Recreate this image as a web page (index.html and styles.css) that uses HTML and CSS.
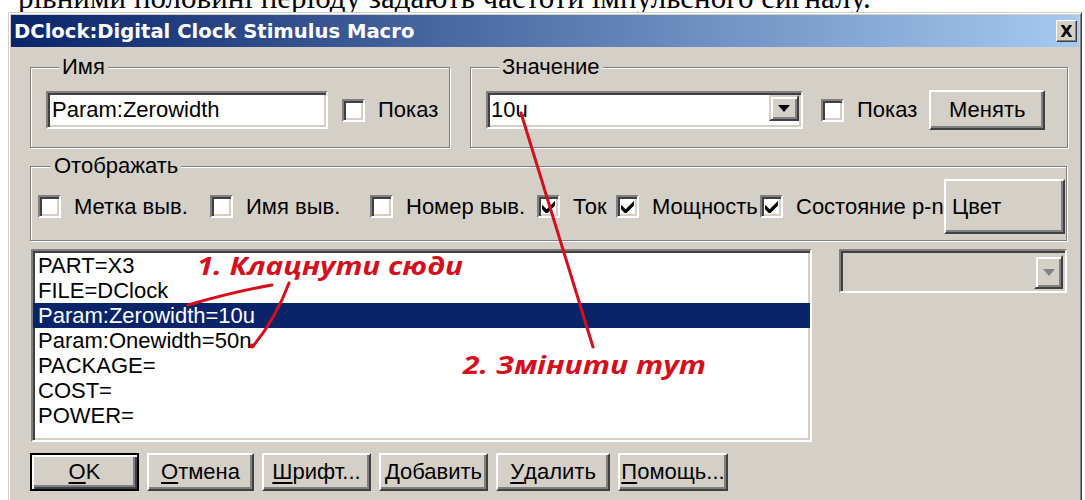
FILE: index.html
```html
<!DOCTYPE html>
<html lang="uk">
<head>
<meta charset="utf-8">
<title>DClock:Digital Clock Stimulus Macro</title>
<link rel="stylesheet" href="styles.css">
</head>
<body>
  <div class="doc-line"><p>рівними половині періоду задають частоти імпульсного сигналу.</p></div>

  <div class="window">
    <div class="titlebar">
      <span class="title">DClock:Digital Clock Stimulus Macro</span>
      <span class="close">X</span>
    </div>

    <div class="client">
      <div class="top-row">
        <fieldset class="group group-name">
          <legend>Имя</legend>
          <div class="edit name-edit">Param:Zerowidth</div>
          <label class="check"><span class="box"></span><span>Показ</span></label>
        </fieldset>

        <fieldset class="group group-value">
          <legend>Значение</legend>
          <div class="combo value-combo">
            <span class="combo-text">10u</span>
            <span class="drop"><svg viewBox="0 0 7 4"><polygon points="0,0 7,0 3.5,4"/></svg></span>
          </div>
          <label class="check"><span class="box"></span><span>Показ</span></label>
          <span class="btn change-btn">Менять</span>
        </fieldset>
      </div>

      <fieldset class="group group-show">
        <legend>Отображать</legend>
        <label class="check"><span class="box"></span><span>Метка выв.</span></label>
        <label class="check"><span class="box"></span><span>Имя выв.</span></label>
        <label class="check"><span class="box"></span><span>Номер выв.</span></label>
        <label class="check"><span class="box"><svg class="tick" viewBox="0 0 7 7"><polygon points="0,2.5 2.5,5 7,0.5 7,3 2.5,7.5 0,5"/></svg></span><span>Ток</span></label>
        <label class="check"><span class="box"><svg class="tick" viewBox="0 0 7 7"><polygon points="0,2.5 2.5,5 7,0.5 7,3 2.5,7.5 0,5"/></svg></span><span>Мощность</span></label>
        <label class="check"><span class="box"><svg class="tick" viewBox="0 0 7 7"><polygon points="0,2.5 2.5,5 7,0.5 7,3 2.5,7.5 0,5"/></svg></span><span>Состояние p-n</span></label>
        <span class="btn color-btn">Цвет</span>
      </fieldset>

      <div class="mid-row">
        <ul class="listbox">
          <li>PART=X3</li>
          <li>FILE=DClock</li>
          <li class="selected">Param:Zerowidth=10u</li>
          <li>Param:Onewidth=50n</li>
          <li>PACKAGE=</li>
          <li>COST=</li>
          <li>POWER=</li>
        </ul>
        <div class="combo combo-disabled">
          <span class="combo-text"></span>
          <span class="drop"><svg viewBox="0 0 7 4"><polygon points="0,0 7,0 3.5,4"/></svg></span>
        </div>
      </div>

      <div class="btn-row">
        <span class="btn btn-default"><u>O</u>K</span>
        <span class="btn"><u>О</u>тмена</span>
        <span class="btn"><u>Ш</u>рифт...</span>
        <span class="btn"><u>Д</u>обавить</span>
        <span class="btn"><u>У</u>далить</span>
        <span class="btn"><u>П</u>омощь...</span>
      </div>
    </div>
  </div>

  <!-- hand-drawn callouts on top of the dialog -->
  <svg class="callouts" viewBox="0 0 1085 500" width="1085" height="500">
    <g class="strokes">
      <path d="M272 285 Q232 292 188 305"/>
      <path d="M289 283 Q276 318 254 345"/>
      <path d="M521 113 Q556 228 593 347"/>
    </g>
    <circle class="dot" cx="252" cy="346" r="2.5"/>
    <text class="note" x="197" y="275" textLength="266" lengthAdjust="spacingAndGlyphs">1. Клацнути сюди</text>
    <text class="note" x="463" y="374" textLength="243" lengthAdjust="spacingAndGlyphs">2. Змінити тут</text>
  </svg>
</body>
</html>
```

FILE: styles.css
```css
body {
  margin: 0;
  width: 1085px;
  height: 500px;
  overflow: hidden;
  position: relative;
  background: #fff;
  font-family: "Liberation Sans", Arial, sans-serif;
  font-size: 22px;
  color: #000;
}

/* line of the surrounding document, cut off by the top edge */
.doc-line {
  height: 12px;
  overflow: hidden;
}
.doc-line p {
  margin: -18px 0 0 18px;
  font: 31px/32px "Liberation Serif", "Times New Roman", serif;
  white-space: nowrap;
}

/* classic window frame */
.window {
  margin-left: 8px;
  width: 1074px;
  height: 494px;
  box-sizing: border-box;
  padding: 2px;
  background: #d4d0c8;
  border: 1px solid;
  border-color: #d4d0c8 #404040 #404040 #d4d0c8;
  box-shadow: inset 1px 1px #fff, inset -1px -1px #808080;
}

.titlebar {
  height: 32px;
  display: flex;
  align-items: center;
  justify-content: space-between;
  padding: 0 2px 0 3px;
  background: linear-gradient(to right, #0a246a, #a6caf0);
}
.title {
  color: #fff;
  font: bold 19.6px "DejaVu Sans", Verdana, sans-serif;
  white-space: nowrap;
}
.close {
  width: 21px;
  height: 22px;
  box-sizing: border-box;
  display: flex;
  align-items: center;
  justify-content: center;
  background: #d4d0c8;
  border: 1px solid;
  border-color: #fff #404040 #404040 #fff;
  box-shadow: inset -1px -1px #808080;
  font: bold 16px "DejaVu Sans", sans-serif;
}

.client {
  padding: 9px 11px 0 19px;
}

/* etched group boxes */
.group {
  margin: 0;
  min-width: 0;
  box-sizing: border-box;
  border: 1px solid #808080;
  box-shadow: inset 1px 1px #fff, 1px 1px #fff;
  display: flex;
  align-items: center;
}
.group legend {
  margin-left: 13px;
  padding: 0 3px;
  line-height: 22px;
  background: #d4d0c8;
  white-space: nowrap;
}

.top-row {
  display: flex;
  gap: 20px;
}
.group-name {
  width: 420px;
  padding: 12px 8px 17px 15px;
}
.group-value {
  width: 598px;
  padding: 12px 8px 17px 15px;
}

/* sunken fields */
.edit,
.combo,
.box,
.listbox {
  box-sizing: border-box;
  border: 2px solid;
  border-color: #808080 #fff #fff #808080;
  box-shadow: inset 2px 2px #404040, inset -2px -2px #d4d0c8;
  background: #fff;
}

.edit {
  height: 38px;
  display: flex;
  align-items: center;
  padding: 0 4px;
  white-space: nowrap;
}
.name-edit {
  width: 282px;
}

.combo {
  height: 38px;
  display: flex;
  align-items: flex-start;
  padding: 2px;
}
.combo-text {
  flex: 1;
  align-self: center;
  padding-left: 1px;
}
.value-combo {
  width: 317px;
}
.drop {
  width: 30px;
  height: 26px;
  box-sizing: border-box;
  display: flex;
  align-items: center;
  justify-content: center;
  background: #d4d0c8;
  border: 2px solid;
  border-color: #d4d0c8 #404040 #404040 #d4d0c8;
  box-shadow: inset 2px 2px #fff, inset -2px -2px #808080;
}
.drop svg {
  width: 12px;
  height: 7px;
  fill: #000;
}

.check {
  display: flex;
  align-items: center;
  gap: 13px;
  white-space: nowrap;
}
.box {
  width: 23px;
  height: 23px;
  flex: none;
  display: flex;
  align-items: center;
  justify-content: center;
}
.tick {
  width: 13px;
  height: 13px;
  fill: #000;
}
.group-name .check {
  margin-left: 14px;
}
.group-value .check {
  margin-left: 18px;
}

/* raised push buttons */
.btn {
  box-sizing: border-box;
  display: flex;
  align-items: center;
  justify-content: center;
  background: #d4d0c8;
  border: 2px solid;
  border-color: #fff #404040 #404040 #fff;
  box-shadow: inset -2px -2px #808080;
  white-space: nowrap;
}
.btn u {
  text-underline-offset: 3px;
}
.change-btn {
  width: 116px;
  height: 40px;
  margin-left: 12px;
}

.group-show {
  width: 1037px;
  margin-top: 7px;
  padding: 2px 0 6px 7px;
  display: grid;
  grid-template-columns: 172px 160px 167px 79px 144px 184px 121px;
  align-items: center;
}
.color-btn {
  height: 55px;
  justify-content: flex-start;
  padding-left: 6px;
}

.mid-row {
  display: flex;
  align-items: flex-start;
  gap: 27px;
  margin-top: 8px;
  padding-left: 1px;
}
.listbox {
  width: 781px;
  height: 193px;
  margin: 0;
  padding: 2px 0 0 0;
  list-style: none;
  overflow: hidden;
}
.listbox li {
  height: 25px;
  line-height: 25px;
  padding-left: 5px;
  white-space: nowrap;
}
.listbox .selected {
  background: #0a246a;
  color: #fff;
}

.combo-disabled {
  width: 228px;
  height: 44px;
  background: #d4d0c8;
  padding: 4px 2px 2px;
  justify-content: flex-end;
}
.combo-disabled .combo-text {
  display: none;
}
.combo-disabled .drop {
  width: 29px;
  height: 34px;
}
.combo-disabled .drop svg {
  fill: #808080;
}

.btn-row {
  display: grid;
  grid-template-columns: 109px 107px 109px 109px 114px 110px;
  column-gap: 8px;
  margin-top: 11px;
}
.btn-row .btn {
  height: 38px;
}
.btn-default {
  border: 2px solid #000;
  box-shadow: inset 2px 2px #fff, inset -2px -2px #404040, inset -4px -4px #808080;
}

/* red callouts */
.callouts {
  position: absolute;
  left: 0;
  top: 0;
  pointer-events: none;
}
.strokes path {
  fill: none;
  stroke: #d4101e;
  stroke-width: 3;
  stroke-linecap: round;
}
.dot {
  fill: #d4101e;
}
.note {
  fill: #d4101e;
  font-family: "Open Sans", "Noto Sans", sans-serif;
  font-size: 25px;
  font-weight: bold;
  font-style: italic;
}
```
